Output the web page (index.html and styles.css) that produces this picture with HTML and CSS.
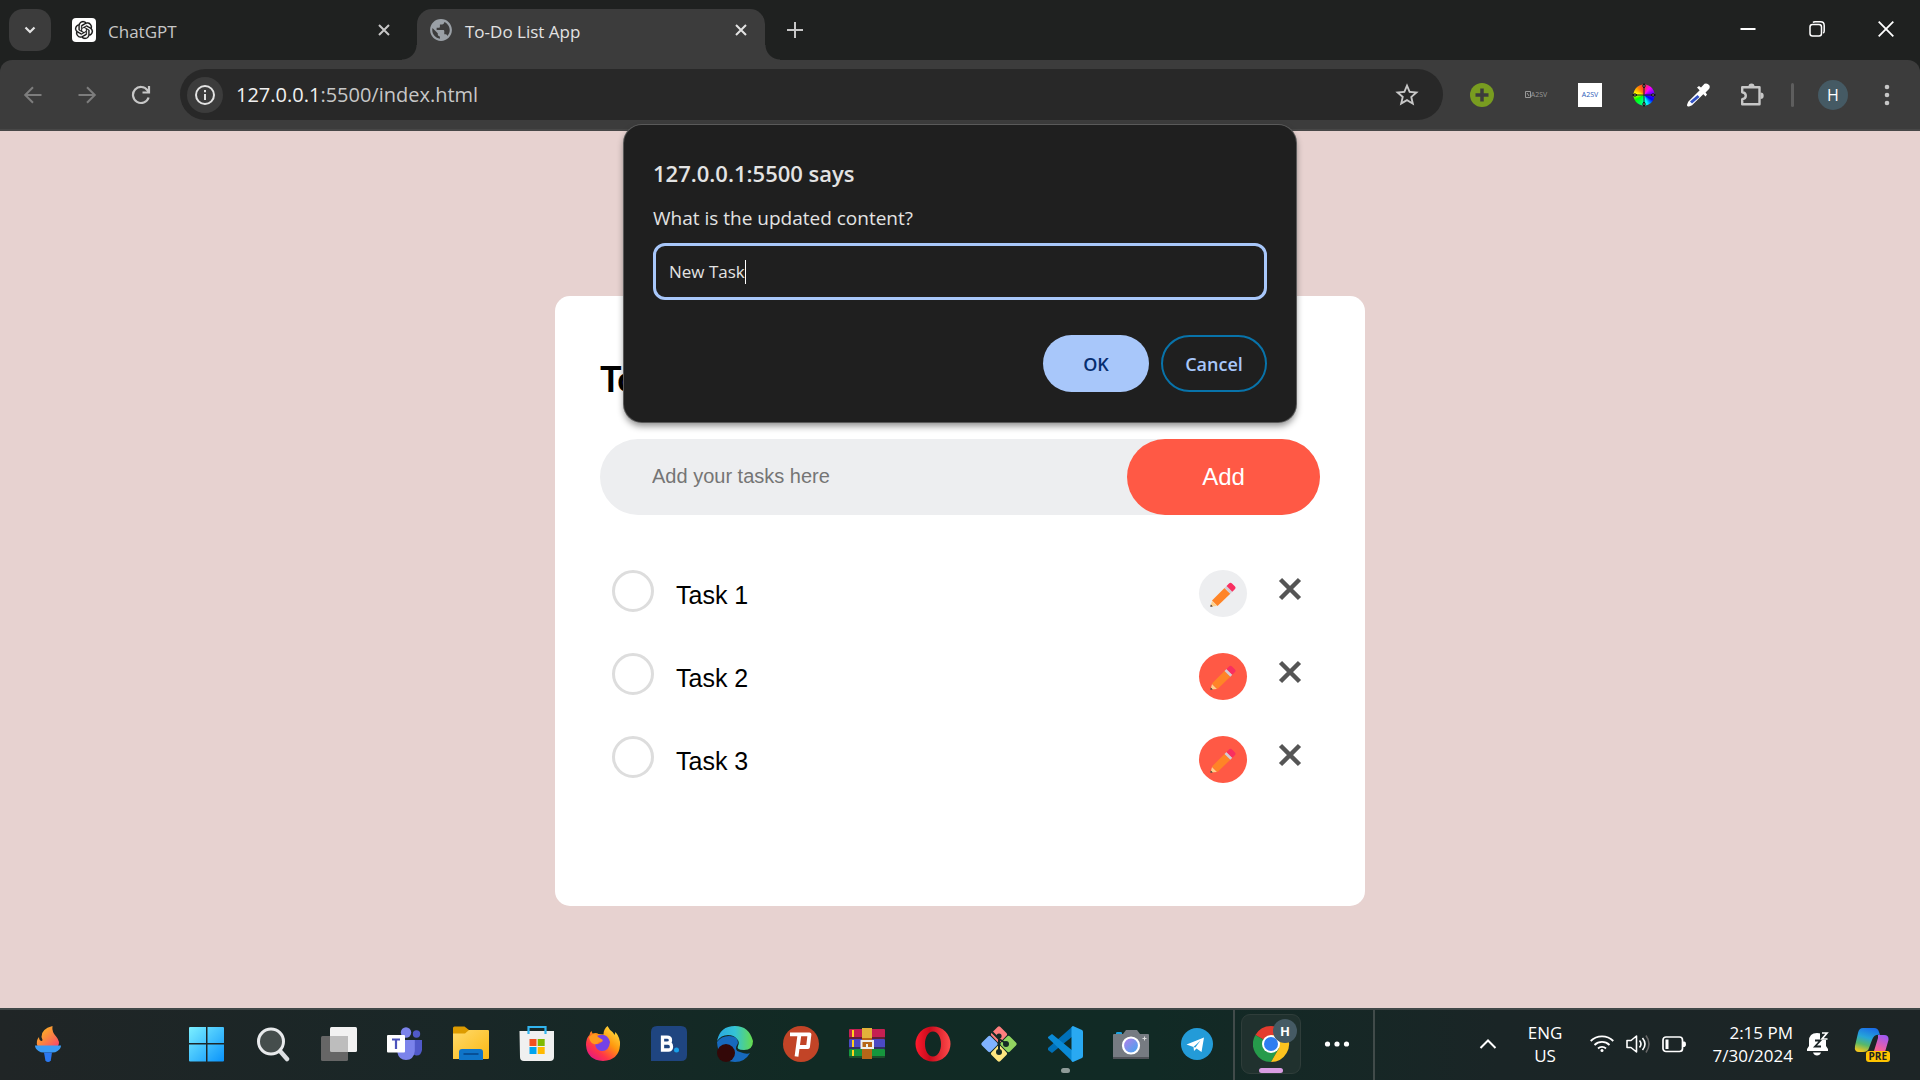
FILE: index.html
```html
<!DOCTYPE html>
<html lang="en">
<head>
<meta charset="utf-8">
<title>To-Do List App</title>
<link rel="stylesheet" href="styles.css">
</head>
<body>
<header class="browser">
  <div class="tabstrip">
    <button class="tab-search" aria-label="Search tabs"><svg width="12" height="12" viewBox="0 0 12 12"><path d="M1.500 3.500 6 8l4.500-4.500" fill="none" stroke="currentColor" stroke-width="2.200"/></svg></button>
    <div class="tab">
      <svg class="favicon" width="24" height="24" viewBox="0 0 24 24"><rect width="24" height="24" rx="4" fill="#fff"/><g transform="translate(3 3) scale(.75)"><path d="M22.2819 9.8211a5.9847 5.9847 0 0 0-.5157-4.9108 6.0462 6.0462 0 0 0-6.5098-2.9A6.0651 6.0651 0 0 0 4.9807 4.1818a5.9847 5.9847 0 0 0-3.9977 2.9 6.0462 6.0462 0 0 0 .7427 7.0966 5.98 5.98 0 0 0 .511 4.9107 6.051 6.051 0 0 0 6.5146 2.9001A5.9847 5.9847 0 0 0 13.2599 24a6.0557 6.0557 0 0 0 5.7718-4.2058 5.9894 5.9894 0 0 0 3.9977-2.9001 6.0557 6.0557 0 0 0-.7475-7.0729zm-9.022 12.6081a4.4755 4.4755 0 0 1-2.8764-1.0408l.1419-.0804 4.7783-2.7582a.7948.7948 0 0 0 .3927-.6813v-6.7369l2.02 1.1686a.071.071 0 0 1 .038.052v5.5826a4.504 4.504 0 0 1-4.4945 4.4944zm-9.6607-4.1254a4.4708 4.4708 0 0 1-.5346-3.0137l.142.0852 4.783 2.7582a.7712.7712 0 0 0 .7806 0l5.8428-3.3685v2.3324a.0804.0804 0 0 1-.0332.0615L9.74 19.9502a4.4992 4.4992 0 0 1-6.1408-1.6464zM2.3408 7.8956a4.485 4.485 0 0 1 2.3655-1.9728V11.6a.7664.7664 0 0 0 .3879.6765l5.8144 3.3543-2.0201 1.1685a.0757.0757 0 0 1-.071 0l-4.8303-2.7865A4.504 4.504 0 0 1 2.3408 7.872zm16.5963 3.8558L13.1038 8.364 15.1192 7.2a.0757.0757 0 0 1 .071 0l4.8303 2.7913a4.4944 4.4944 0 0 1-.6765 8.1042v-5.6772a.79.79 0 0 0-.407-.667zm2.0107-3.0231l-.142-.0852-4.7735-2.7818a.7759.7759 0 0 0-.7854 0L9.409 9.2297V6.8974a.0662.0662 0 0 1 .0284-.0615l4.8303-2.7866a4.4992 4.4992 0 0 1 6.6802 4.66zM8.3065 12.863l-2.02-1.1638a.0804.0804 0 0 1-.038-.0567V6.0742a4.4992 4.4992 0 0 1 7.3757-3.4537l-.142.0805L8.704 5.459a.7948.7948 0 0 0-.3927.6813zm1.0976-2.3654l2.602-1.4998 2.6069 1.4998v2.9994l-2.5974 1.4997-2.6067-1.4997Z" fill="#111" stroke="#111" stroke-width=".3"/></g></svg>
      <span class="tab-title">ChatGPT</span>
      <button class="tab-close" aria-label="Close tab"><svg width="12" height="12" viewBox="0 0 12 12"><path d="m1 1 10 10M11 1 1 11" stroke="currentColor" stroke-width="2"/></svg></button>
    </div>
    <div class="tab active">
      <svg class="favicon" width="24" height="24" viewBox="1 1 22 22"><path fill="#9aa0a6" d="M12 2C6.48 2 2 6.48 2 12s4.48 10 10 10 10-4.480 10-10S17.520 2 12 2zm-1 17.930c-3.950-.490-7-3.850-7-7.930 0-.620.080-1.210.210-1.790L9 15v1c0 1.100.900 2 2 2v1.930zm6.900-2.540c-.260-.810-1-1.390-1.900-1.390h-1v-3c0-.550-.450-1-1-1H8v-2h2c.550 0 1-.450 1-1V7h2c1.100 0 2-.900 2-2v-.410c2.930 1.190 5 4.060 5 7.410 0 2.080-.800 3.970-2.100 5.390z"/></svg>
      <span class="tab-title">To-Do List App</span>
      <button class="tab-close" aria-label="Close tab"><svg width="12" height="12" viewBox="0 0 12 12"><path d="m1 1 10 10M11 1 1 11" stroke="currentColor" stroke-width="2"/></svg></button>
    </div>
    <button class="new-tab" aria-label="New tab"><svg width="16" height="16" viewBox="0 0 16 16"><path d="M8 0v16M0 8h16" stroke="currentColor" stroke-width="2"/></svg></button>
    <div class="window-controls">
      <button aria-label="Minimize"><svg width="16" height="16" viewBox="0 0 16 16"><path d="M.5 8h15" stroke="#fff" stroke-width="2"/></svg></button>
      <button aria-label="Restore"><svg width="16" height="16" viewBox="0 0 16 16" fill="none" stroke="#fff" stroke-width="1.500"><rect x="1" y="3.500" width="11.500" height="11.500" rx="2.500"/><path d="M4 1.500Q4.600.8 6 .8h5.500q3.700 0 3.700 3.700V10q0 1.400-1 2.200"/></svg></button>
      <button aria-label="Close"><svg width="16" height="16" viewBox="0 0 16 16"><path d="m.7.700 14.600 14.600M15.300.7.700 15.300" stroke="#fff" stroke-width="1.800"/></svg></button>
    </div>
  </div>
  <div class="toolbar">
    <button class="tool dim" aria-label="Back"><svg width="20" height="20" viewBox="0 0 20 20"><path d="M18.500 10h-16M10 2.200 2.200 10l7.800 7.800" fill="none" stroke="currentColor" stroke-width="2"/></svg></button>
    <button class="tool dim" aria-label="Forward"><svg width="20" height="20" viewBox="0 0 20 20"><path d="M1.500 10h16M10 2.200l7.800 7.800-7.800 7.800" fill="none" stroke="currentColor" stroke-width="2"/></svg></button>
    <button class="tool" aria-label="Reload"><svg width="20" height="20" viewBox="0 0 20 20"><path d="M17.600 12.500A8 8 0 1 1 16.500 5.300l1.500 1.700M18 1v6.500h-6.500" fill="none" stroke="currentColor" stroke-width="2.200"/></svg></button>
    <div class="omnibox">
      <button class="site-info" aria-label="View site information"><svg width="20" height="20" viewBox="0 0 20 20"><circle cx="10" cy="10" r="9" fill="none" stroke="currentColor" stroke-width="2"/><path d="M10 9v6M10 5v2.200" stroke="currentColor" stroke-width="2"/></svg></button>
      <a class="url" href="#"><span class="host">127.0.0.1</span>:5500/index.html</a>
      <button class="bookmark" aria-label="Bookmark this tab"><svg width="28" height="28" viewBox="0 0 24 24"><path fill="currentColor" d="M22 9.240l-7.190-.620L12 2 9.190 8.630 2 9.240l5.460 4.730L5.820 21 12 17.270 18.180 21l-1.630-7.030L22 9.240zM12 15.400l-3.760 2.270 1-4.280-3.320-2.880 4.380-.380L12 6.100l1.710 4.040 4.380.380-3.320 2.880 1 4.280L12 15.400z"/></svg></button>
    </div>
    <div class="extensions">
      <button aria-label="Add extension"><svg width="24" height="24" viewBox="0 0 24 24"><circle cx="12" cy="12" r="12" fill="#789c20"/><path d="M12 5.500v13M5.500 12h13" stroke="#3c3c3c" stroke-width="3.500"/></svg></button>
      <button class="mini-logo"><svg width="6" height="7" viewBox="0 0 6 7"><path d="M.5.500h5v6h-5zM2 2l2 3" fill="none" stroke="#999"/></svg><span>A2SV</span></button>
      <button class="mini-logo boxed"><span>A2SV</span></button>
      <button aria-label="Colour wheel"><span class="wheel"><svg width="24" height="24" viewBox="0 0 24 24"><path d="M12 2v20M2 12h20" stroke="#222"/><g fill="#888" stroke="#111"><path d="m12 .5 1.300 2.500L12 5l-1.300-2zM12 19l1.300 2-1.300 2.500-1.300-2.500zM.5 12 3 10.700 5 12l-2 1.300zM19 12l2-1.300 2.500 1.300-2.500 1.300z"/></g></svg></span></button>
      <button aria-label="Colour picker"><svg width="24" height="24" viewBox="0 0 24 24"><path d="M15 8 3.500 19.500 2.500 22l3-1.200L17 9.500" fill="#3c3c3c" stroke="#fff" stroke-width="3" stroke-linejoin="round"/><path d="m11.500 12 2 2-7.500 6.500-2-2z" fill="#2f50c4"/><path d="m11 4.500 2-1.500 2 1.500L18.500.7q3-1 4.800 1.600 1 2-.300 3.700L19.500 9.500l1.500 2-1.500 2z" fill="#fff"/></svg></button>
      <button aria-label="Extensions"><svg width="24" height="24" viewBox="0 0 24 24"><path d="M2.200 4.200h17.300v17.100H2.200v-5.100q3.600-.600 3.600-3.500T2.200 9.200z" fill="none" stroke="#c7c7c7" stroke-width="2.400" stroke-linejoin="round"/><path d="M8.500 3.500a3 3 0 0 1 6 0zM20.500 9.500a3.200 3.200 0 0 1 0 6.400z" fill="#c7c7c7"/></svg></button>
    </div>
    <span class="divider"></span>
    <button class="avatar">H</button>
    <button class="menu" aria-label="Menu"><svg width="6" height="22" viewBox="0 0 6 22" fill="#c7c7c7"><circle cx="3" cy="3" r="2.300"/><circle cx="3" cy="11" r="2.300"/><circle cx="3" cy="19" r="2.300"/></svg></button>
  </div>
</header>

<main class="page">
  <section class="card">
    <h1>To-Do List</h1>
    <form class="add-row">
      <input type="text" placeholder="Add your tasks here" aria-label="New task">
      <button type="button">Add</button>
    </form>
    <ul class="tasks">
      <li><input type="checkbox" id="t1"><label for="t1">Task 1</label><button class="edit hover" aria-label="Edit Task 1"><svg width="26" height="26"><use href="#pencil"/></svg></button><button class="remove" aria-label="Remove Task 1"><svg width="24" height="24"><use href="#cross"/></svg></button></li>
      <li><input type="checkbox" id="t2"><label for="t2">Task 2</label><button class="edit" aria-label="Edit Task 2"><svg width="26" height="26"><use href="#pencil"/></svg></button><button class="remove" aria-label="Remove Task 2"><svg width="24" height="24"><use href="#cross"/></svg></button></li>
      <li><input type="checkbox" id="t3"><label for="t3">Task 3</label><button class="edit" aria-label="Edit Task 3"><svg width="26" height="26"><use href="#pencil"/></svg></button><button class="remove" aria-label="Remove Task 3"><svg width="24" height="24"><use href="#cross"/></svg></button></li>
    </ul>
  </section>

  <div class="prompt" role="dialog" aria-labelledby="prompt-title">
    <h2 id="prompt-title">127.0.0.1:5500 says</h2>
    <label class="message" for="answer">What is the updated content?</label>
    <div class="field"><input id="answer" type="text" value="New Task"><span class="caret"></span></div>
    <div class="actions">
      <button class="ok">OK</button>
      <button class="cancel">Cancel</button>
    </div>
  </div>
</main>

<footer class="taskbar">
  <button class="widgets" aria-label="Widgets"><svg width="28" height="38" viewBox="0 0 28 38"><path d="M3.500 21Q1.500 16 5 12q0 4 3 4 1-1-.500-4Q7 4 18.500 1q-1 6 4 11 4 5 1.500 9z" fill="url(#flame)"/><path d="M1 20.500h26q0 3-3.500 5.500-2 1.500-5 1.500h-9q-3 0-5-1.500Q1 23.500 1 20.500z" fill="#3b9bf5"/><path d="M10 27.500h8l-1.200 8q-2.800 3-5.400 0z" fill="#2b78f0"/></svg></button>
  <nav class="apps">
    <button aria-label="Start"><svg width="36" height="36" viewBox="0 0 36 36"><path d="M0 2q0-1 1-1h16v16H0zM18.500 1H34q1 0 1 1v15H18.500zM0 18.500h17v17H1q-1 0-1-1zM18.500 18.500H35v16q0 1-1 1H18.500z" fill="url(#win)"/></svg></button>
    <button aria-label="Search"><svg width="36" height="36" viewBox="0 0 36 36"><path d="m25 25 7 8" stroke="#dcdfe2" stroke-width="4.500" stroke-linecap="round"/><circle cx="16" cy="15.500" r="12.500" fill="#454d4c" stroke="#e8eaec" stroke-width="3"/></svg></button>
    <button aria-label="Task view"><svg width="36" height="36" viewBox="0 0 36 36"><rect x="9" y="1" width="27" height="25" rx="1.500" fill="#f2f2f2"/><rect y="10" width="27" height="25" rx="1.500" fill="#666"/><path d="M9 10h18v16H10.500Q9 26 9 24.500z" fill="#bdbdbd"/></svg></button>
    <button aria-label="Teams"><svg width="36" height="36" viewBox="0 0 36 36"><circle cx="29.500" cy="8" r="3.700" fill="#5059c9"/><path d="M24 14h11v10q-1 6-6 5.500l-5-2z" fill="#5059c9"/><circle cx="19" cy="6.500" r="5.200" fill="#7b83eb"/><path d="M10.500 14h17.300v11q-1 9-8.800 9-7 0-8.500-7z" fill="#7b83eb"/><rect y="9" width="18" height="17.500" rx="1" fill="#fff"/><path d="M5 13.500h8M9 13.500v9.500" stroke="#4b53bc" stroke-width="2.200"/></svg></button>
    <button aria-label="File Explorer"><svg width="36" height="36" viewBox="0 0 36 36"><path d="M0 2q0-1.500 1.500-1.500h10L16 4v6H0z" fill="#dd9b00"/><path d="M0 7.500h12L16 4h19q1 0 1 1v27q0 1-1 1H0z" fill="url(#folder)"/><path d="M6 34V26q0-3 3-3h18q3 0 3 3v8z" fill="#0f74c8"/><path d="M10.500 28h15" stroke="#074f96" stroke-width="2"/></svg></button>
    <button aria-label="Store"><svg width="36" height="36" viewBox="0 0 36 36"><path d="M.500 5h34.500v26q0 4-4 4h-26q-4 0-4-4z" fill="#f0f0f0"/><path d="M9.500 8V1h17v7" fill="none" stroke="#31b4ee" stroke-width="2.200"/><path d="M10.500 13h7v7h-7z" fill="#f25022"/><path d="M18.700 13h7v7h-7z" fill="#7fba00"/><path d="M10.500 21h7v7h-7z" fill="#00a4ef"/><path d="M18.700 21h7v7h-7z" fill="#ffb900"/></svg></button>
    <button aria-label="Firefox"><svg width="36" height="36" viewBox="0 0 36 36"><path d="M22.500 0q2 4 5 6 1 1 2 3l1-3q5 6 4.500 13-1 15-17 16Q2 34 1 19 1 12 4.500 9q.500-3 2-4l1 2.500q4-1 6 .500l5 .500Q18.500 3 22.500 0z" fill="url(#fox)"/><path d="M12 10q10-4 13 6-1 9-8 9-6 0-7-7 3 1 5-1l3-2q-4-1-6-5z" fill="#7542e5"/><path d="M4 11q6-6 9 0l5 3q-1 2-4 2-2 3-5 2-4-1-5-7z" fill="#ff9a1f"/></svg></button>
    <button aria-label="Booking"><svg width="36" height="36" viewBox="0 0 36 36"><path d="M6 0h24q6 0 6 6v23q0 6-6 6H0V6q0-6 6-6z" fill="#1f4580"/><path d="M11.500 11.200H16q3.500 0 3.500 3t-3.500 3h-4.500zm0 6H17q3.500 0 3.500 3.500T17 24h-5.500z" fill="none" stroke="#fff" stroke-width="3.300"/><circle cx="25.500" cy="24" r="2.500" fill="#18a0ea"/></svg></button>
    <button aria-label="Edge"><svg width="36" height="36" viewBox="0 0 36 36"><path d="M0 16Q4 10 12 10q9 0 9 7-5 8 2 9 7 3 10 1Q28 36 18 36 1 35 0 16z" fill="#1769bd"/><path d="M0 15Q3 0 18 0q14 0 18 15 0 9-9 9-8 0-6-4 2-4-1-7-3-4-9-4Q4 9 0 15z" fill="url(#edge)"/><circle cx="9" cy="27" r="9" fill="#330808"/></svg></button>
    <button aria-label="Psiphon"><svg width="36" height="36" viewBox="0 0 36 36"><circle cx="18" cy="18" r="18" fill="#c24427"/><path d="M7 8.300h19.500l-1.500 12.700h-9M16.500 8.300 13.500 30.500" fill="none" stroke="#fff" stroke-width="3.800" stroke-linejoin="round"/></svg></button>
    <button aria-label="WinRAR"><svg width="36" height="36" viewBox="0 0 36 36"><rect y="3" width="36" height="10" rx="1" fill="#c52052"/><rect y="13" width="36" height="10" rx="1" fill="#4b49c4"/><rect y="23" width="36" height="9" rx="1" fill="#16963d"/><path d="M0 11h36v2H0zM0 21h36v2H0zM0 30h36v2H0z" fill="#222" opacity=".6"/><path d="M3 4h2v7H3zM3 14h2v7H3zM3 24h2v6H3z" fill="#ffd21d"/><rect x="13" y="2" width="10" height="31" fill="#b76618"/><path d="M13 2h10v10H13z" fill="#e2b33a"/><rect x="12.500" y="15" width="11.500" height="7" fill="none" stroke="#eee" stroke-width="2"/><path d="M18 18v5" stroke="#eee" stroke-width="2"/></svg></button>
    <button aria-label="Opera"><svg width="36" height="36" viewBox="0 0 36 36"><path fill-rule="evenodd" d="M18 .500a17.500 17.500 0 1 1 0 35 17.500 17.500 0 1 1 0-35zm0 5c-5 0-8 6-8 12.500S13 30.500 18 30.500 26 24.500 26 18 23 5.500 18 5.500z" fill="url(#opera)"/></svg></button>
    <button aria-label="Git"><svg width="36" height="36" viewBox="0 0 36 36"><g transform="rotate(45 18 18)"><rect x="5" y="5" width="12.500" height="12.500" rx="2" fill="#ff7f7f"/><rect x="18.500" y="5" width="12.500" height="12.500" rx="2" fill="#92d560"/><rect x="5" y="18.500" width="12.500" height="12.500" rx="2" fill="#80b3ff"/><rect x="18.500" y="18.500" width="12.500" height="12.500" rx="2" fill="#ffe680"/></g><path d="m10 5 8 8v13M18 13l8 5" fill="none" stroke="#152a26" stroke-width="2"/><g fill="#152a26"><circle cx="18" cy="10" r="2.600"/><circle cx="25" cy="18" r="3"/><circle cx="18" cy="26" r="3"/></g></svg></button>
    <button class="running" aria-label="Visual Studio Code"><svg width="36" height="36" viewBox="0 0 36 36"><path d="M26 0v10L5 27l-4-3v-2z" fill="#0070b8"/><path d="M1 12v-1l4-3 21 17v11z" fill="#0a8ad6"/><path d="M26 0l9 4q1 .5 1 2v24q0 1.500-1 2l-9 4q-1.500-.5-1.500-1.500V1.500Q24.500.5 26 0z" fill="#29a9f2"/></svg></button>
    <button aria-label="Camera"><svg width="36" height="36" viewBox="0 0 36 36"><path d="M3 9V7q0-1 1.500-1h3Q9 6 9 7v2z" fill="#19a4e6"/><path d="M0 9q0-1 1-1h9l3-4h11l3 4h8q1 0 1 1v24H0z" fill="#767b82"/><path d="M0 31h36v2H0z" fill="#505359"/><circle cx="18" cy="19.500" r="8" fill="url(#lens)" stroke="#fff" stroke-width="2.200"/><path d="M31.500 10.500v4M29.500 12.500h4" stroke="#ddd"/></svg></button>
    <button aria-label="Telegram"><svg width="36" height="36" viewBox="0 0 36 36"><circle cx="18" cy="18" r="16" fill="#239bd8"/><path d="m7.500 18.500 17.500-7-2.500 14.500-5-3.500-2.500 2.500-.500-4z" fill="#fff"/><path d="m14.500 21 7-6.500-5.200 7z" fill="#239bd8"/></svg></button>
  </nav>
  <span class="bar"></span>
  <nav class="apps">
    <button class="current" aria-label="Chrome"><span class="tile"><svg width="50" height="50" viewBox="0 0 50 50"><g transform="translate(0 8)"><path d="M18 18 2.400 9a18 18 0 0 1 31.200 0z" fill="#e33b2e"/><path d="M18 18 2.400 9A18 18 0 0 0 18 36l7.800-13.500z" fill="#269b4b"/><path d="M18 36a18 18 0 0 0 15.600-27H18l7.800 13.500z" fill="#fcc31e"/><circle cx="18" cy="18" r="9" fill="#fff"/><circle cx="18" cy="18" r="7" fill="#2f7df0"/></g></svg><span class="badge">H</span></span></button>
    <button aria-label="More apps"><svg width="26" height="6" viewBox="0 0 26 6" fill="#fff"><circle cx="3.500" cy="3" r="2.600"/><circle cx="13" cy="3" r="2.600"/><circle cx="22.500" cy="3" r="2.600"/></svg></button>
  </nav>
  <span class="bar"></span>
  <div class="tray">
    <button aria-label="Hidden icons"><svg width="18" height="12" viewBox="0 0 18 12"><path d="m1.500 10 7.500-7.500L16.500 10" fill="none" stroke="#fff" stroke-width="2"/></svg></button>
    <button class="lang">ENG<br>US</button>
    <button class="status" aria-label="Network, sound, battery">
      <svg width="24" height="24" viewBox="0 0 24 24" fill="none" stroke="#fff" stroke-width="1.800"><path d="M.700 9a16 16 0 0 1 22.600 0M4.500 13a10.700 10.700 0 0 1 15 0M8 16.500a5.800 5.800 0 0 1 8 0"/><circle cx="12" cy="18.500" r="1.500" fill="#fff" stroke="none"/></svg>
      <svg width="24" height="24" viewBox="0 0 24 24" fill="none" stroke="#fff" stroke-width="1.600"><path d="M1 8.500h4L10.500 4v16L5 15.500H1z" stroke-linejoin="round"/><path d="M13.500 8.500q3 3.500 0 7M16.500 6q5 6 0 12"/><path d="M20 3.500q6 8.500 0 17" stroke="#666"/></svg>
      <svg width="24" height="24" viewBox="0 0 24 24"><rect x="1" y="5" width="19.500" height="14.500" rx="3" fill="none" stroke="#fff" stroke-width="1.700"/><path d="M3.500 7.500h3v9.500h-3zM21 9.500h1.500q1.500 0 1.500 2.700T22.500 15H21z" fill="#fff"/></svg>
    </button>
    <button class="clock">2:15 PM<br>7/30/2024</button>
    <button aria-label="Notifications"><svg width="22" height="26" viewBox="0 0 22 26"><path d="M0 20v-2l2-3v-5q0-8 8-8 9 0 9 8v5l2 3v2zM6 21.500h8q-1 3-4 3t-4-3z" fill="#fff"/><path d="M8 9.500h5.500L8 15.500h6" fill="none" stroke="#1b2526" stroke-width="1.800"/><path d="M13 0h9v9h-9z" fill="#1b2526"/><path d="M15 2h5l-5 6h5.500" fill="none" stroke="#fff" stroke-width="1.700"/></svg></button>
    <button class="copilot"><svg width="36" height="36" viewBox="0 0 36 36"><path d="M9 2h11q4 0 5 4l1 3q-6-1-8 5l-3 8q-1 4-6 4H5q-5 0-4-6L4 7q1-5 5-5z" fill="url(#cop1)"/><path d="M24 9h6q5 0 4.500 5L31 26l-4 8H12q6-2 8-9l4-13z" fill="url(#cop2)"/></svg><span>PRE</span></button>
  </div>
</footer>

<svg class="defs" width="0" height="0" aria-hidden="true">
  <defs>
    <symbol id="pencil" viewBox="0 0 26 26"><path d="m2 19 5 5-6.500.500z" fill="#ffd08a"/><path d="m.800 22.500 2 2-2.500.200z" fill="#43332d"/><path d="M2 18.500 14.500 6l5.800 5.800L7.500 24z" fill="#ff8427"/><path d="m14.500 6 2-2 5.800 5.800-2 2z" fill="#d3cdd5"/><path d="m16.500 4 2.500-2.500q1.500-1.500 3 0l2.800 2.800q1.500 1.500 0 3L22.300 9.800z" fill="#f92f60"/></symbol>
    <symbol id="cross" viewBox="0 0 24 24"><path d="m2.500 2.500 19 19m0-19-19 19" stroke="#555" stroke-width="4.500"/></symbol>
    <linearGradient id="flame" x1="0" y1="0" x2="1" y2="1"><stop offset="0" stop-color="#ffc61a"/><stop offset=".5" stop-color="#fb8a3c"/><stop offset="1" stop-color="#f8456c"/></linearGradient>
    <linearGradient id="win" x1="0" y1="0" x2="1" y2="1"><stop offset="0" stop-color="#7cf0ff"/><stop offset="1" stop-color="#0a93fb"/></linearGradient>
    <linearGradient id="folder" x1="0" y1="0" x2="1" y2="1"><stop offset="0" stop-color="#ffda6b"/><stop offset="1" stop-color="#fbb813"/></linearGradient>
    <linearGradient id="fox" x1="1" y1="0" x2=".2" y2="1"><stop offset="0" stop-color="#fff44f"/><stop offset=".45" stop-color="#ff980e"/><stop offset=".75" stop-color="#ff3647"/><stop offset="1" stop-color="#e31587"/></linearGradient>
    <linearGradient id="edge"><stop offset="0" stop-color="#29a7e2"/><stop offset=".5" stop-color="#34c3d5"/><stop offset="1" stop-color="#66dc4c"/></linearGradient>
    <linearGradient id="opera"><stop offset="0" stop-color="#ff1b2d"/><stop offset=".4" stop-color="#c90a1c"/><stop offset="1" stop-color="#ff4b4b"/></linearGradient>
    <linearGradient id="lens" x1="0" y1="0" x2="1" y2="1"><stop offset="0" stop-color="#bb7ce8"/><stop offset="1" stop-color="#39a9f0"/></linearGradient>
    <linearGradient id="cop1" x1=".6" y1="0" x2=".3" y2="1"><stop offset="0" stop-color="#1b6fe8"/><stop offset=".4" stop-color="#26a5d8"/><stop offset=".7" stop-color="#57b86a"/><stop offset="1" stop-color="#f2c61f"/></linearGradient>
    <linearGradient id="cop2" x1=".7" y1="0" x2=".3" y2="1"><stop offset="0" stop-color="#a259f0"/><stop offset=".5" stop-color="#ef5fa0"/><stop offset="1" stop-color="#ff8a5a"/></linearGradient>
  </defs>
</svg>
</body>
</html>
```
FILE: styles.css
```css
* { box-sizing: border-box; }

body {
  margin: 0;
  min-height: 100vh;
  display: flex;
  flex-direction: column;
  background: #e7d2d0;
  font-family: "Open Sans", "Noto Sans", sans-serif;
  font-size: 18px;
}

button {
  padding: 0;
  border: 0;
  background: none;
  color: inherit;
  font: inherit;
  display: flex;
  align-items: center;
  justify-content: center;
}

input { font: inherit; outline: 0; }
svg { display: block; flex: none; }
.defs { position: absolute; }

/* Browser chrome */
.browser { background: #1f2120; color: #c7c7c7; }

.tabstrip { display: flex; height: 60px; padding: 9px 0 0 9px; }
.tab-search { width: 42px; height: 42px; border-radius: 14px; background: #3c3c3c; color: #e3e3e3; }
.tab {
  display: flex;
  align-items: center;
  width: 348px;
  height: 51px;
  padding: 0 18px 9px 12px;
  margin-left: 9px;
  font-size: 17px;
}
.tab-title { flex: 1; margin-left: 12px; line-height: 24px; padding-top: 3px; }
.tab-close { width: 12px; height: 24px; }
.tab.active {
  position: relative;
  background: #3c3c3c;
  color: #e3e3e3;
  border-radius: 15px 15px 0 0;
}
.tab.active::before, .tab.active::after {
  content: "";
  position: absolute;
  bottom: 0;
  width: 15px;
  height: 15px;
}
.tab.active::before { left: -15px; background: radial-gradient(circle at 0 0, #1f2120 14px, #3c3c3c 15px); }
.tab.active::after { right: -15px; background: radial-gradient(circle at 100% 0, #1f2120 14px, #3c3c3c 15px); }
.new-tab { width: 42px; height: 42px; margin-left: 9px; }
.window-controls { display: flex; margin-left: auto; }
.window-controls button { width: 69px; height: 40px; }

.toolbar {
  display: flex;
  align-items: center;
  height: 71px;
  padding: 0 12px 0 12px;
  background: #3c3c3c;
  border-bottom: 2px solid #474747;
  border-radius: 12px 12px 0 0;
}
.tool { width: 42px; height: 42px; margin-right: 12px; }
.dim { color: #7d7d7d; }
.omnibox {
  flex: 1;
  display: flex;
  align-items: center;
  height: 51px;
  margin-left: 6px;
  padding: 0 22px 0 7px;
  border-radius: 26px;
  background: #282828;
}
.site-info { width: 36px; height: 36px; border-radius: 50%; background: #3c3c3c; color: #e3e3e3; }
.url { flex: 1; margin-left: 13px; color: #c7c7c7; font-size: 20px; text-decoration: none; }
.host { color: #f0f0f0; }
.extensions { display: flex; margin-left: 12px; }
.extensions button { width: 54px; height: 36px; }
.extensions .mini-logo { font-size: 7px; color: #999; }
.mini-logo.boxed span {
  width: 24px;
  line-height: 24px;
  background: #fff;
  color: #2c5cb8;
  text-align: center;
}
.wheel {
  border-radius: 50%;
  background: radial-gradient(circle, transparent 10px, #3c3c3c 11px), conic-gradient(#f33, #f0f, #60f, #00f, #0ff, #0f6, #0f0, #ff0, #f80, #f33);
}
.divider { width: 3px; height: 24px; margin-left: 12px; border-radius: 2px; background: #5e5e5e; }
.avatar { width: 30px; height: 30px; margin-left: 24px; border-radius: 50%; background: #455a64; color: #fff; font-size: 16px; }
.menu { width: 42px; margin-left: 18px; }

/* Page */
.page { position: relative; flex: 1; padding-top: 165px; font-family: "Liberation Sans", Arial, sans-serif; }
.card { width: 100%; max-width: 810px; margin: 0 auto 102px; padding: 58px 45px 105px; border-radius: 15px; background: #fff; color: #000; }
.card h1 { margin: 0 0 37px; font: 700 36px/48px Lato, "Open Sans", sans-serif; }

.add-row { display: flex; height: 76px; border-radius: 38px; background: #edeef0; }
.add-row input { flex: 1; min-width: 0; padding: 0 0 2px 52px; border: 0; background: none; font-size: 20px; }
.add-row input::placeholder { color: #757575; }
.add-row button { width: 193px; border-radius: 38px; background: #ff5945; color: #fff; font-size: 24px; }

.tasks { list-style: none; margin: 37px 0 0; padding: 0; }
.tasks li { display: flex; align-items: flex-start; padding: 18px 18px 15px 12px; }
.tasks input { appearance: none; width: 42px; height: 42px; margin: 0; border: 3px solid #ddd; border-radius: 50%; }
.tasks label { flex: 1; margin-left: 22px; font-size: 25px; line-height: 50px; }
.edit { width: 48px; height: 47px; padding-top: 3px; border-radius: 50%; background: #ff5945; }
.edit.hover { background: #edeef0; }
.remove { width: 24px; height: 38px; margin-left: 31px; }

/* Prompt dialog */
.prompt {
  position: absolute;
  top: -6px;
  left: 0;
  right: 0;
  width: 672px;
  margin: auto;
  padding: 30px 29px;
  border-radius: 18px;
  background: #1f1f1f;
  box-shadow: 0 0 0 1px #5a5a5a, 0 4px 7px rgba(0, 0, 0, .45);
  color: #e3e3e3;
  font-family: "Open Sans", "Noto Sans", sans-serif;
}
.prompt h2 { margin: 0 0 12px; font-size: 22px; font-weight: 600; line-height: 36px; }
.message { display: block; font-size: 19px; line-height: 30px; }
.field {
  display: flex;
  align-items: center;
  height: 57px;
  margin-top: 10px;
  padding: 0 13px;
  border: 3px solid #a8c7fa;
  border-radius: 12px;
}
.field input { field-sizing: content; padding: 0; border: 0; background: none; color: #e3e3e3; font-size: 17px; }
.caret { width: 1px; height: 24px; background: #fff; }
.actions { display: flex; justify-content: flex-end; gap: 12px; margin-top: 35px; }
.actions button { width: 106px; height: 57px; border-radius: 29px; font-size: 18px; font-weight: 600; }
.ok { background: #a8c7fa; color: #062e6f; }
.actions .cancel { border: 2px solid #0873aa; color: #a8c7fa; }

/* Taskbar */
.taskbar {
  display: flex;
  align-items: stretch;
  height: 72px;
  padding: 0 30px 2px 15px;
  border-top: 2px solid #404848;
  background: linear-gradient(90deg, #202526, #192727 25%, #112a24 42%, #112a25 60%, #1a2526 78%, #1d2526);
  color: #fff;
}
.widgets { width: 66px; margin-right: 93px; }
.apps { display: flex; }
.apps button { position: relative; width: 66px; }
.running::after, .current::after {
  content: "";
  position: absolute;
  bottom: 5px;
  width: 9px;
  height: 5px;
  border-radius: 3px;
  background: #8f9b98;
}
.current::after { width: 24px; background: #d89de3; }
.bar { width: 2px; margin: 0 3px -2px 3px; background: #414b4a; }
.tile { position: relative; width: 60px; height: 60px; padding: 3px 0 0 11px; border: 1px solid #2f3d3a; border-radius: 9px; background: #20312e; }
.badge {
  position: absolute;
  top: 4px;
  right: 3px;
  width: 24px;
  height: 24px;
  border-radius: 50%;
  background: #455a64;
  font-size: 13px;
  font-weight: 700;
  line-height: 24px;
}
.tray { display: flex; align-items: center; margin-left: auto; font-size: 17px; line-height: 23px; }
.lang { width: 52px; margin-left: 22px; }
.status { gap: 12px; margin-left: 19px; }
.clock { min-width: 83px; margin-left: 24px; margin-right: 14px; text-align: right; justify-content: flex-end; }
.copilot { position: relative; margin-left: 25px; }
.copilot span {
  position: absolute;
  right: 0;
  bottom: 0;
  padding: 0 3px;
  border-radius: 3px;
  background: #ffc400;
  color: #222;
  font-size: 10px;
  font-weight: 700;
  line-height: 11px;
}
```
